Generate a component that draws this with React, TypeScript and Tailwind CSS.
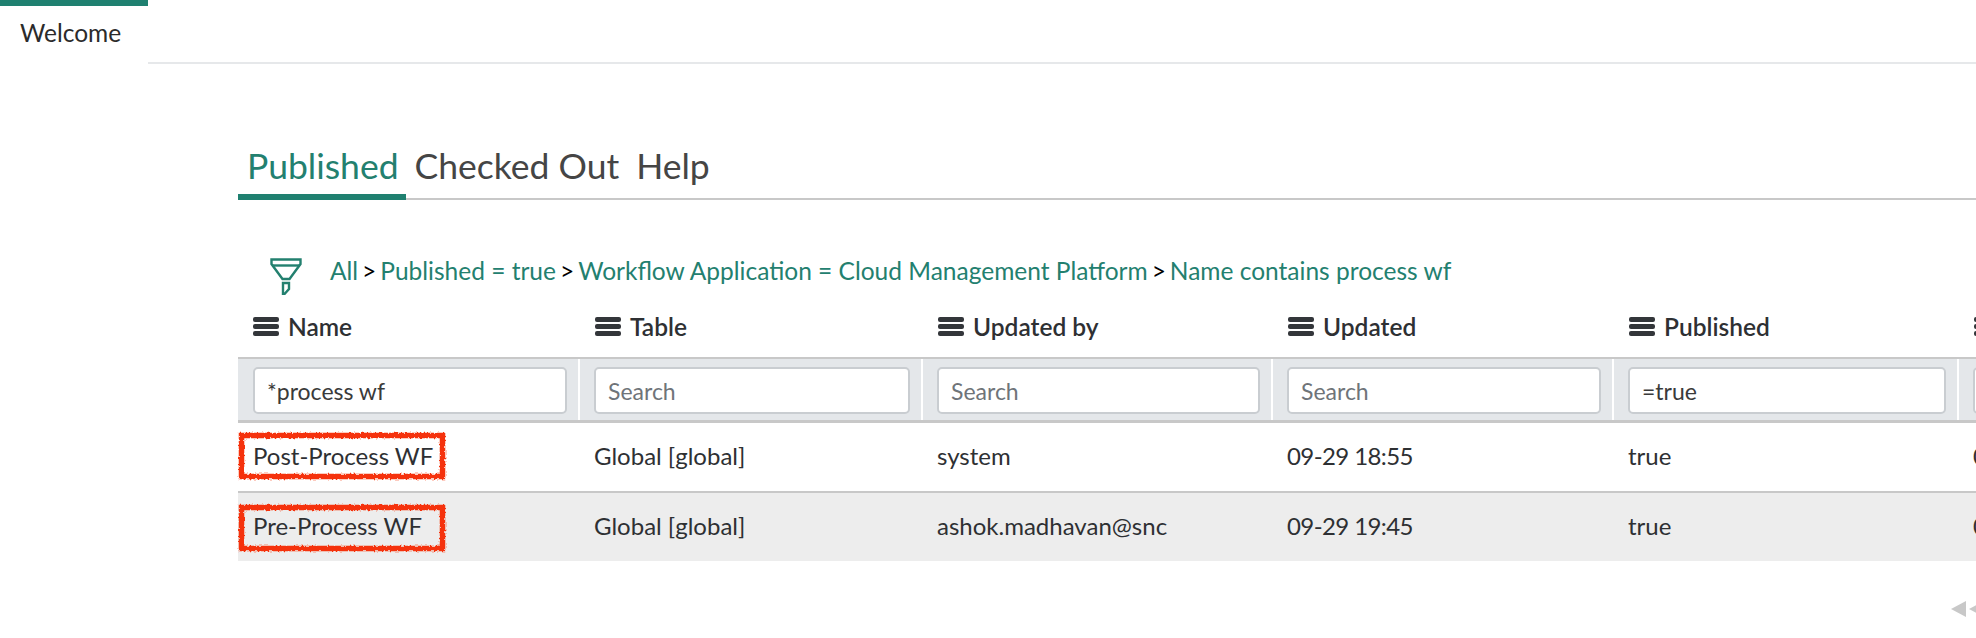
import React from "react";

function Bars() {
  return (
    <svg width="26" height="19" viewBox="0 0 26 19" className="shrink-0" fill="#33363a">
      <rect x="0" y="0" width="26" height="5" rx="2" />
      <rect x="0" y="7" width="26" height="5" rx="2" />
      <rect x="0" y="14" width="26" height="5" rx="2" />
    </svg>
  );
}

function Funnel() {
  return (
    <svg width="32" height="37" viewBox="0 0 32 37" fill="none" stroke="#23806f" strokeWidth="2.4" className="shrink-0">
      <path d="M1.5 1.5H30.5V6L19.5 21H12.5L1.5 6Z" />
      <path d="M2 7.5H30" />
      <path d="M13 25H19V31L14.5 36H13Z" />
    </svg>
  );
}

function RedBox() {
  return (
    <svg width="208" height="48" viewBox="0 0 208 48" className="absolute left-0 overflow-visible pointer-events-none top-0">
      <defs>
        <filter id="rough" x="-5%" y="-15%" width="110%" height="130%">
          <feTurbulence type="fractalNoise" baseFrequency="0.5" numOctaves="2" seed="4" />
          <feDisplacementMap in="SourceGraphic" scale="3.5" xChannelSelector="R" yChannelSelector="G" />
        </filter>
      </defs>
      <rect x="3.5" y="3.5" width="201" height="41" fill="none" stroke="#f5310d" strokeWidth="5.5" filter="url(#rough)" />
    </svg>
  );
}

const cols = ["Name", "Table", "Updated by", "Updated", "Published", ""];
const filters = ["*process wf", "", "", "", "=true"];
const rows = [
  ["Post-Process WF", "Global [global]", "system", "09-29 18:55", "true", "0"],
  ["Pre-Process WF", "Global [global]", "ashok.madhavan@snc", "09-29 19:45", "true", "0"],
];
const grid = "grid grid-cols-[342px_343px_350px_341px_345px_300px] w-[2021px]";

export default function App() {
  return (
    <div className="w-[1976px] h-[638px] overflow-hidden bg-white font-['Lato',sans-serif] text-[#2e3033]">
      <div className="flex h-16">
        <div className="w-[148px] border-t-[6px] border-[#1f8070] pl-5 pt-[10px] text-[24.5px] leading-[34px] text-[#2b2b2b]">Welcome</div>
        <div className="flex-1 border-b-2 border-[#e6e8ea]" />
      </div>

      <div className="ml-[238px]">
        <div className="flex h-[136px] items-end border-b-2 border-[#c8c8c8] text-[35.5px] leading-10 text-[#454545]">
          <div className="-mb-[2px] border-b-[6px] border-[#1f8070] pb-[8px] pl-[9px] pr-[7px] text-[#23806f]">Published</div>
          <div className="ml-[9px] pb-[12px]">Checked Out</div>
          <div className="ml-[17px] pb-[12px]">Help</div>
        </div>

        <div className="flex h-[100px] items-start pl-[32px] pt-[58px]">
          <Funnel />
          <div className="ml-[28px] -mt-[2px] flex items-center text-[24.5px] leading-[30px] text-[#23806f]">
            <span>All</span>
            <span className="mx-[4px] text-black">&gt;</span>
            <span>Published = true</span>
            <span className="mx-[4px] text-black">&gt;</span>
            <span>Workflow Application = Cloud Management Platform</span>
            <span className="mx-[4px] text-black">&gt;</span>
            <span>Name contains process wf</span>
          </div>
        </div>

        <div className={`${grid} h-[57px] items-center pb-1 text-[24.5px] leading-7`}>
          {cols.map((c, i) => (
            <div key={i} className="flex items-center gap-[9px] pl-[15px]">
              <Bars />
              {c && <span className="font-semibold">{c}</span>}
            </div>
          ))}
        </div>

        <div className={`${grid} h-[66px] border-y-2 border-b-[3px] border-[#c8c8c8] bg-[#e4e7ea]`}>
          {[...filters, ""].map((f, i) => (
            <div key={i} className={`border-r-2 border-white pr-[11px] pt-2 ${i === 0 ? "pl-[15px]" : "pl-[14px]"}`}>
              <input
                readOnly
                value={f}
                placeholder="Search"
                className="h-[47px] w-full rounded-[5px] border-2 border-[#c9cdd1] bg-white px-[12px] text-[23px] text-[#3a3a3a] outline-none placeholder:text-[#6f7479]"
              />
            </div>
          ))}
        </div>

        {rows.map((r, ri) => (
          <div key={ri} className={`${grid} ${ri === 0 ? "h-[70px] border-b-2 border-[#c8c8c8] bg-white" : "h-[68px] bg-[#ededed]"} text-[24px] leading-[66px]`}>
            {r.map((c, i) => (
              <div key={i} className={`relative ${i === 0 ? "pl-[15px]" : "pl-[14px]"} ${i === 3 ? "tracking-[-0.6px]" : ""}`}>
                {c}
                {i === 0 && (
                  <div className={`absolute left-0 ${ri === 0 ? "top-[9px]" : "top-[11px]"} h-12 w-[208px]`}>
                    <RedBox />
                  </div>
                )}
              </div>
            ))}
          </div>
        ))}
      </div>

      <div className="mt-[40px] flex justify-end">
        <svg width="25" height="16" viewBox="0 0 25 16" fill="#c8c8c8">
          <path d="M0 8L15 0V16Z" />
          <path d="M18 8L33 0V16Z" />
        </svg>
      </div>
    </div>
  );
}
